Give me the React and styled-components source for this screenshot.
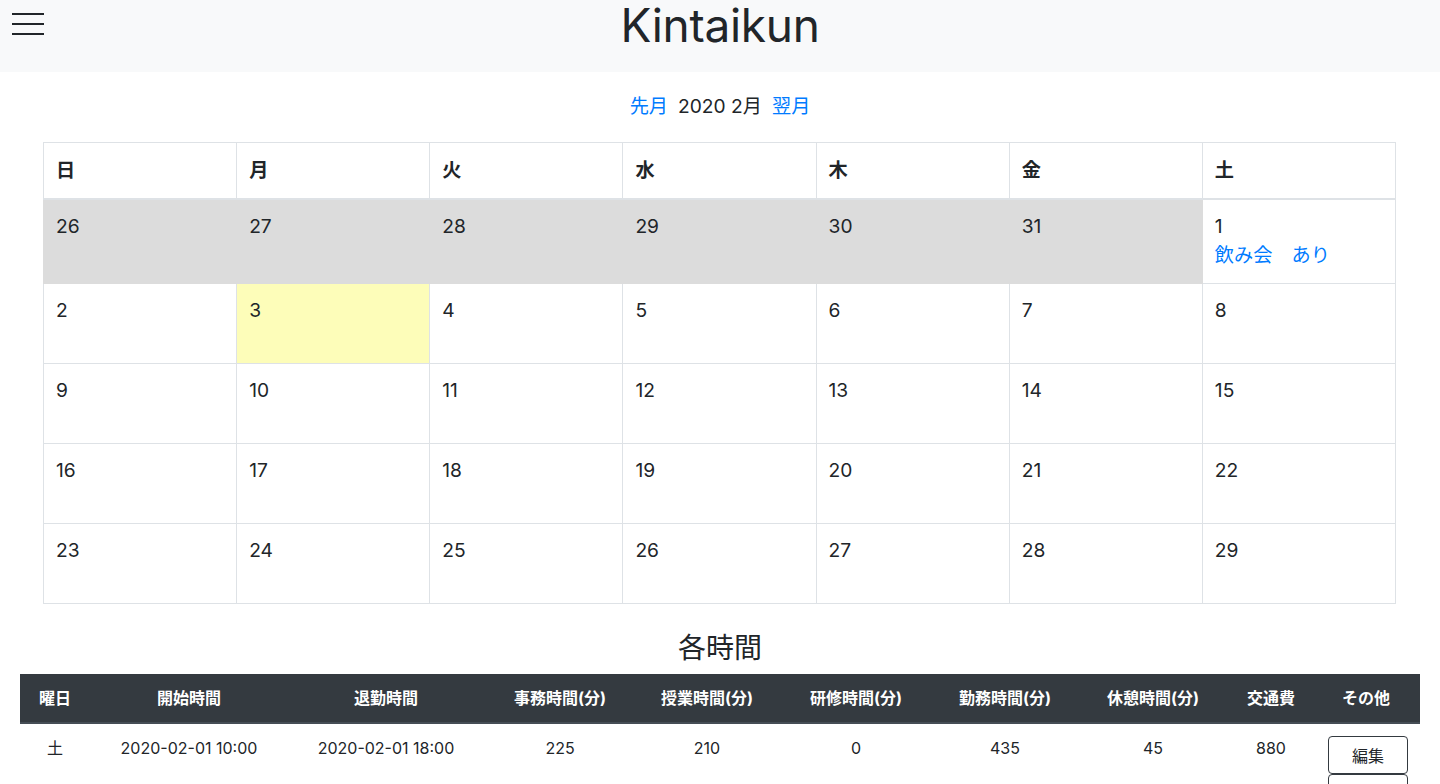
import React from 'react';
import styled, { createGlobalStyle } from 'styled-components';

const GlobalStyle = createGlobalStyle`
    body {
        margin: 0;
        font-family: "Inter", "Noto Sans CJK JP", sans-serif;
        color: #212529;
        background: #fff;
    }
`;

const Navbar = styled.header`
    height: 72px;
    background: #f8f9fa;
    display: grid;
    grid-template-columns: 1fr auto 1fr;
    align-items: start;
`;

const Burger = styled.button`
    justify-self: start;
    margin: 13px 0 0 12px;
    padding: 0;
    width: 32px;
    border: none;
    background: transparent;
    display: flex;
    flex-direction: column;
    gap: 8.5px;
    cursor: pointer;
`;

const BurgerLine = styled.span`
    display: block;
    height: 1.5px;
    background: #212529;
`;

const Title = styled.h1`
    margin: 0;
    font-size: 46px;
    font-weight: 400;
    line-height: 50px;
    color: #212529;
    letter-spacing: -0.3px;
`;

const MonthNav = styled.div`
    display: flex;
    justify-content: center;
    gap: 10px;
    padding: 20px 0 22px;
    font-size: 19.2px;
    line-height: 28px;
`;

const NavLink = styled.a`
    color: #007bff;
    text-decoration: none;
    cursor: pointer;
`;

const Calendar = styled.table`
    margin: 0 44px 0 43px;
    width: calc(100% - 87px);
    border-collapse: collapse;
    table-layout: fixed;
    font-size: 19.2px;
    line-height: 1.5;
`;

const DayHead = styled.th`
    text-align: left;
    font-weight: 700;
    padding: 13px 12px;
    border: 1px solid #dee2e6;
    border-bottom-width: 2px;
`;

const DayCell = styled.td`
    height: 80px;
    box-sizing: border-box;
    vertical-align: top;
    padding: 12px 12px 14px;
    border: 1px solid #dee2e6;
    background: ${p => (p.$kind === 'out' ? '#dcdcdc' : p.$kind === 'today' ? '#fdfdb9' : '#fff')};
    border-color: ${p => (p.$kind === 'out' ? '#dcdcdc' : '#dee2e6')};
`;

const EventLink = styled(NavLink)`
    display: block;
`;

const SectionTitle = styled.h3`
    margin: 28px 0 8px;
    text-align: center;
    font-size: 28px;
    font-weight: 400;
    line-height: 1.2;
`;

const TimesTable = styled.table`
    margin: 0 20px;
    width: calc(100% - 40px);
    border-collapse: collapse;
    table-layout: fixed;
    font-size: 16px;
    line-height: 24px;
`;

const Th = styled.th`
    background: #343a40;
    color: #fff;
    font-weight: 700;
    padding: 12px 4px;
    border-bottom: 2px solid #454d55;
    text-align: center;
    white-space: nowrap;
`;

const Td = styled.td`
    padding: 12px 4px;
    text-align: center;
    vertical-align: top;
    white-space: nowrap;
`;

const ButtonStack = styled.div`
    display: flex;
    flex-direction: column;
    align-items: center;
    padding-left: 4px;
`;

const EditButton = styled.button`
    width: 80px;
    height: 38px;
    box-sizing: border-box;
    font-family: inherit;
    font-size: 16px;
    color: #212529;
    background: #fff;
    border: 1px solid #343a40;
    border-radius: 4px;
    cursor: pointer;
`;

const weekdays = ['日', '月', '火', '水', '木', '金', '土'];

const weeks = [
    [26, 27, 28, 29, 30, 31, 1],
    [2, 3, 4, 5, 6, 7, 8],
    [9, 10, 11, 12, 13, 14, 15],
    [16, 17, 18, 19, 20, 21, 22],
    [23, 24, 25, 26, 27, 28, 29],
];

const columns = [
    ['曜日', 70], ['開始時間', 198], ['退勤時間', 196], ['事務時間(分)', 152], ['授業時間(分)', 142],
    ['研修時間(分)', 156], ['勤務時間(分)', 142], ['休憩時間(分)', 154], ['交通費', 82], ['その他', 108],
];

const records = [
    ['土', '2020-02-01 10:00', '2020-02-01 18:00', 225, 210, 0, 435, 45, 880],
];

export default function App() {
    return (
        <>
            <GlobalStyle />
            <Navbar>
                <Burger aria-label="menu">
                    <BurgerLine />
                    <BurgerLine />
                    <BurgerLine />
                </Burger>
                <Title>Kintaikun</Title>
                <div />
            </Navbar>

            <MonthNav>
                <NavLink>先月</NavLink>
                <span>2020 2月</span>
                <NavLink>翌月</NavLink>
            </MonthNav>

            <Calendar>
                <thead>
                    <tr>
                        {weekdays.map(d => <DayHead key={d}>{d}</DayHead>)}
                    </tr>
                </thead>
                <tbody>
                    {weeks.map((week, wi) => (
                        <tr key={wi}>
                            {week.map((day, di) => {
                                const out = wi === 0 && di < 6;
                                const today = wi === 1 && di === 1;
                                return (
                                    <DayCell key={di} $kind={out ? 'out' : today ? 'today' : 'in'}>
                                        {day}
                                        {wi === 0 && di === 6 && <EventLink>飲み会　あり</EventLink>}
                                    </DayCell>
                                );
                            })}
                        </tr>
                    ))}
                </tbody>
            </Calendar>

            <SectionTitle>各時間</SectionTitle>

            <TimesTable>
                <colgroup>
                    {columns.map(([name, w]) => <col key={name} style={{ width: w }} />)}
                </colgroup>
                <thead>
                    <tr>
                        {columns.map(([name]) => <Th key={name}>{name}</Th>)}
                    </tr>
                </thead>
                <tbody>
                    {records.map((r, i) => (
                        <tr key={i}>
                            {r.map((v, j) => <Td key={j}>{v}</Td>)}
                            <Td>
                                <ButtonStack>
                                    <EditButton>編集</EditButton>
                                    <EditButton>削除</EditButton>
                                </ButtonStack>
                            </Td>
                        </tr>
                    ))}
                </tbody>
            </TimesTable>
        </>
    );
}
